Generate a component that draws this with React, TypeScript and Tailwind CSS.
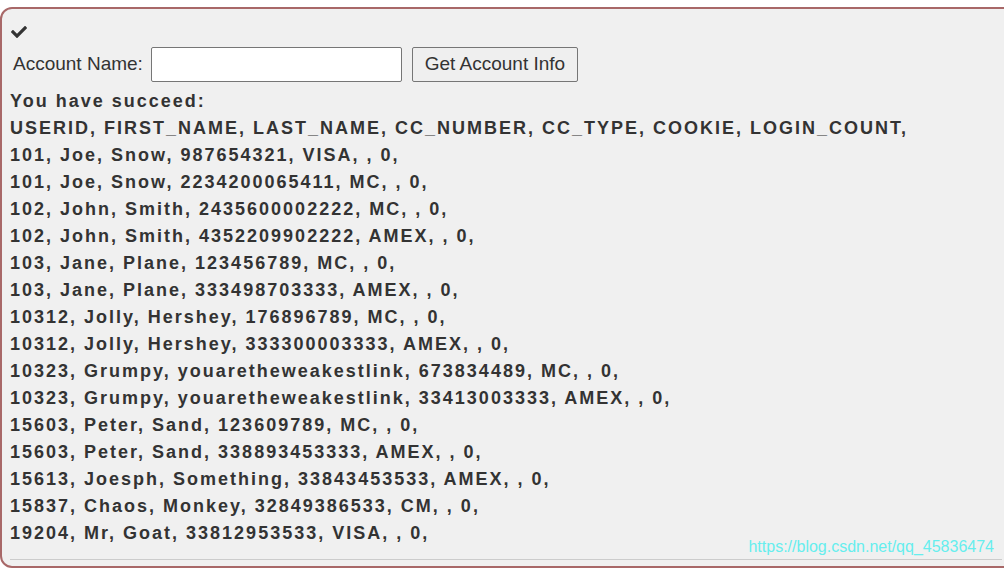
import React from 'react';

const rows = [
  'USERID, FIRST_NAME, LAST_NAME, CC_NUMBER, CC_TYPE, COOKIE, LOGIN_COUNT,',
  '101, Joe, Snow, 987654321, VISA, , 0,',
  '101, Joe, Snow, 2234200065411, MC, , 0,',
  '102, John, Smith, 2435600002222, MC, , 0,',
  '102, John, Smith, 4352209902222, AMEX, , 0,',
  '103, Jane, Plane, 123456789, MC, , 0,',
  '103, Jane, Plane, 333498703333, AMEX, , 0,',
  '10312, Jolly, Hershey, 176896789, MC, , 0,',
  '10312, Jolly, Hershey, 333300003333, AMEX, , 0,',
  '10323, Grumpy, youaretheweakestlink, 673834489, MC, , 0,',
  '10323, Grumpy, youaretheweakestlink, 33413003333, AMEX, , 0,',
  '15603, Peter, Sand, 123609789, MC, , 0,',
  '15603, Peter, Sand, 338893453333, AMEX, , 0,',
  '15613, Joesph, Something, 33843453533, AMEX, , 0,',
  '15837, Chaos, Monkey, 32849386533, CM, , 0,',
  '19204, Mr, Goat, 33812953533, VISA, , 0,',
];

export default function App() {
  return (
    <div className="w-[1004px] h-[569px] overflow-hidden bg-white pt-[7px] font-['Liberation_Sans',Arial,sans-serif] text-[#333]">
      <div className="w-[1020px] h-[561px] border-2 border-[#a86868] rounded-[12px] bg-[#f0f0f0] pl-[7px] pt-[15px] flex flex-col">
        <svg viewBox="0 0 512 512" className="w-[16px] h-[16px] ml-[2px] fill-[#333]">
          <path d="M173.898 439.404l-166.4-166.4c-9.997-9.997-9.997-26.206 0-36.204l36.203-36.204c9.997-9.998 26.207-9.998 36.204 0L192 312.69 432.095 72.596c9.997-9.997 26.207-9.997 36.204 0l36.203 36.204c9.997 9.997 9.997 26.206 0 36.204l-294.4 294.401c-9.998 9.997-26.207 9.997-36.204-.001z" />
        </svg>
        <div className="flex items-center mt-[7px] ml-[4px] text-[19px]">
          <span className="mr-[8px]">Account Name:</span>
          <input className="w-[251px] h-[35px] bg-white border border-[#767676] rounded-[2px] outline-none" />
          <button className="ml-[10px] h-[35px] w-[166px] bg-[#efefef] border border-[#767676] rounded-[2px] text-[19px] text-[#333]">
            Get Account Info
          </button>
        </div>
        <div className="mt-[6px] ml-[1px] font-bold text-[18px] leading-[27px] tracking-[2px]">
          <div>You have succeed:</div>
          {rows.map((r, i) => (
            <div key={i}>{r}</div>
          ))}
        </div>
        <div className="relative mt-[12px] mr-[16px] ml-[1px] border-t border-[#cccccc]">
          <span className="absolute right-[8px] bottom-[1px] text-[16px] text-[#66eeee] font-normal">
            https://blog.csdn.net/qq_45836474
          </span>
        </div>
      </div>
    </div>
  );
}
